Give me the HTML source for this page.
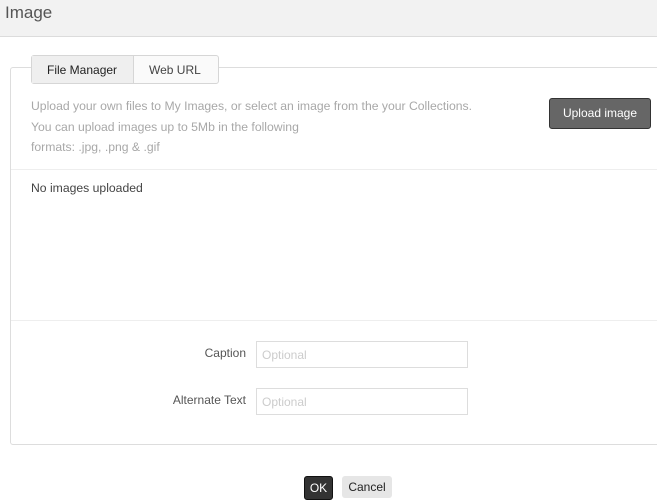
<!DOCTYPE html>
<html><head><style>
body{margin:0;width:657px;height:503px;background:#fff;font-family:"Liberation Sans",Arial,sans-serif;position:relative;overflow:hidden}
.a{position:absolute}
</style></head><body>
<div class="a" style="left:0;top:0;width:657px;height:36px;background:#f2f2f2;border-bottom:1px solid #dcdcdc"></div>
<div class="a" style="left:5px;top:3px;font-size:17px;color:#555">Image</div>
<div class="a" style="left:10px;top:67px;width:660px;height:376px;border:1px solid #ddd;border-radius:3px"></div>
<div class="a" style="left:31px;top:55px;width:186px;height:27px;border:1px solid #d6d6d6;border-radius:3px;background:#fafafa"></div>
<div class="a" style="left:32px;top:56px;width:101px;height:27px;background:#efefef;border-right:1px solid #d6d6d6"></div>
<div class="a" style="left:47px;top:63px;font-size:12px;color:#222">File Manager</div>
<div class="a" style="left:149px;top:63px;font-size:12px;color:#444">Web URL</div>
<div class="a" style="left:31px;top:96px;font-size:12.2px;color:#a8a8a8;line-height:20.5px">Upload your own files to My Images, or select an image from the your Collections.<br>You can upload images up to 5Mb in the following<br>formats: .jpg, .png &amp; .gif</div>
<div class="a" style="left:549px;top:98px;width:100px;height:29px;background:#666;border:1px solid #333;border-radius:3px;color:#fff;font-size:12px;text-align:center;line-height:29px">Upload image</div>
<div class="a" style="left:11px;top:169px;width:646px;height:1px;background:#eee"></div>
<div class="a" style="left:31px;top:181px;font-size:12.2px;color:#444">No images uploaded</div>
<div class="a" style="left:11px;top:320px;width:646px;height:1px;background:#eee"></div>
<div class="a" style="left:160px;top:346px;width:86px;text-align:right;font-size:12px;color:#555">Caption</div>
<div class="a" style="left:256px;top:341px;width:210px;height:25px;border:1px solid #ddd"></div>
<div class="a" style="left:262px;top:348px;font-size:12px;color:#ccc">Optional</div>
<div class="a" style="left:150px;top:393px;width:96px;text-align:right;font-size:12px;color:#555">Alternate Text</div>
<div class="a" style="left:256px;top:388px;width:210px;height:25px;border:1px solid #ddd"></div>
<div class="a" style="left:262px;top:395px;font-size:12px;color:#ccc">Optional</div>
<div class="a" style="left:304px;top:476px;width:27px;height:22px;background:#333;border:1px solid #111;border-radius:3px;color:#fff;font-size:12px;text-align:center;line-height:22px">OK</div>
<div class="a" style="left:342px;top:476px;width:50px;height:22px;background:#e6e6e6;border-radius:3px;color:#222;font-size:12px;text-align:center;line-height:22px">Cancel</div>
</body></html>
